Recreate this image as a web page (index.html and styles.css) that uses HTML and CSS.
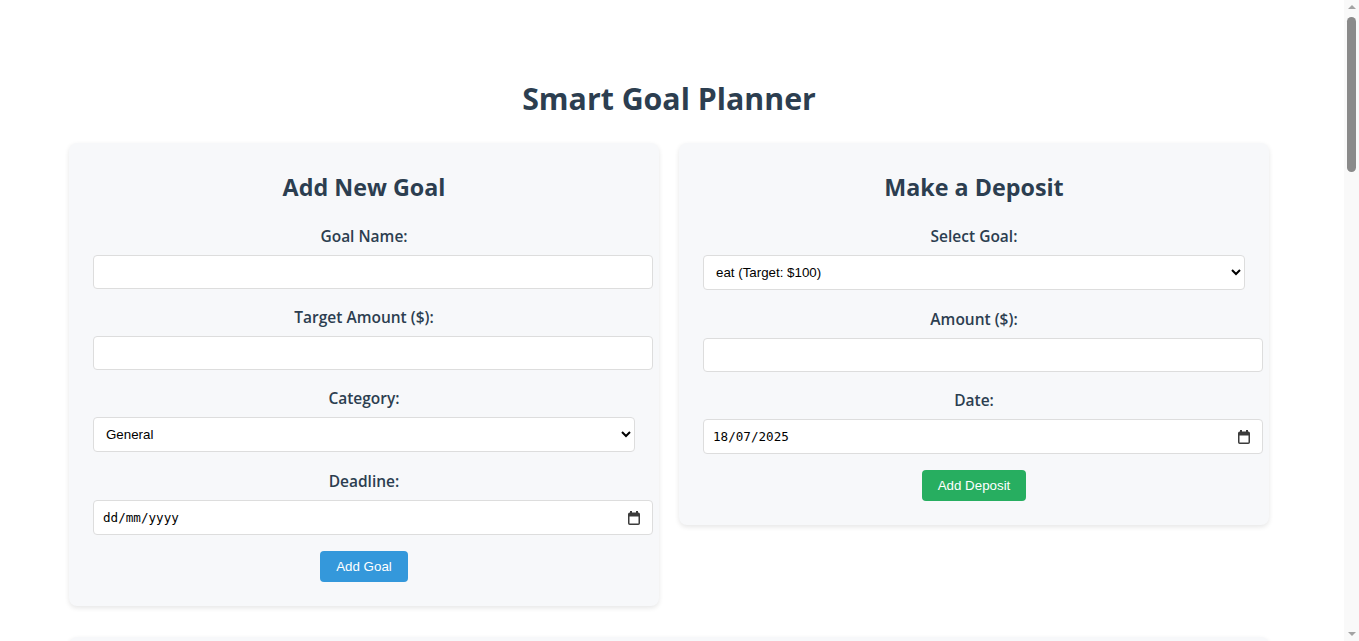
FILE: index.html
```html
<!DOCTYPE html>
<html lang="en">
<head>
<meta charset="utf-8">
<title>Smart Goal Planner</title>
<link rel="stylesheet" href="styles.css">
</head>
<body>
<div class="app">
  <h1 class="title">Smart Goal Planner</h1>
  <div class="grid">
    <section class="card">
      <h2 class="card-title">Add New Goal</h2>
      <form class="form">
        <div class="group">
          <label class="label">Goal Name:</label>
          <input class="field" type="text">
        </div>
        <div class="group">
          <label class="label">Target Amount ($):</label>
          <input class="field" type="number">
        </div>
        <div class="group group-select">
          <label class="label">Category:</label>
          <select class="select">
            <option>General</option>
            <option>Travel</option>
            <option>Education</option>
          </select>
        </div>
        <div class="group group-last">
          <label class="label">Deadline:</label>
          <div class="date-field">
            <input class="date-input" type="text" placeholder="dd/mm/yyyy">
            <svg class="cal" width="12" height="14" viewBox="0 0 12 14"><rect x="2" y="0" width="2" height="2.5" fill="#3b3b3b"/><rect x="8" y="0" width="2" height="2.5" fill="#3b3b3b"/><rect x="0.75" y="2.25" width="10.5" height="11" rx="1" fill="none" stroke="#3b3b3b" stroke-width="1.5"/><rect x="1" y="2.5" width="10" height="3" fill="#3b3b3b"/></svg>
          </div>
        </div>
        <button class="btn btn-blue" type="button">Add Goal</button>
      </form>
    </section>
    <section class="card">
      <h2 class="card-title">Make a Deposit</h2>
      <form class="form">
        <div class="group group-select">
          <label class="label">Select Goal:</label>
          <select class="select">
            <option>eat (Target: $100)</option>
          </select>
        </div>
        <div class="group">
          <label class="label">Amount ($):</label>
          <input class="field" type="number">
        </div>
        <div class="group group-last">
          <label class="label">Date:</label>
          <div class="date-field">
            <input class="date-input" type="text" value="18/07/2025">
            <svg class="cal" width="12" height="14" viewBox="0 0 12 14"><rect x="2" y="0" width="2" height="2.5" fill="#3b3b3b"/><rect x="8" y="0" width="2" height="2.5" fill="#3b3b3b"/><rect x="0.75" y="2.25" width="10.5" height="11" rx="1" fill="none" stroke="#3b3b3b" stroke-width="1.5"/><rect x="1" y="2.5" width="10" height="3" fill="#3b3b3b"/></svg>
          </div>
        </div>
        <button class="btn btn-green" type="button">Add Deposit</button>
      </form>
    </section>
  </div>
  <section class="card card-wide">
    <div class="goal-list"></div>
  </section>
</div>
<div class="scrollbar" aria-hidden="true">
  <span class="sb-arrow sb-up"></span>
  <span class="sb-track"><span class="sb-thumb"></span></span>
  <span class="sb-arrow sb-down"></span>
</div>
</body>
</html>
```
FILE: styles.css
```css
* { box-sizing: content-box; }
html, body { margin: 0; padding: 0; background: #ffffff; }
body {
  font-family: "Open Sans", "Noto Sans", sans-serif;
  color: #2c3e50;
  padding-right: 21px;
}
.app {
  max-width: 1200px;
  margin: 0 auto;
  padding: 77px 0 40px;
}
.title {
  margin: 0 0 23px;
  font-size: 30.3px;
  line-height: 43px;
  font-weight: 700;
  text-align: center;
  color: #2c3e50;
}
.grid {
  display: grid;
  grid-template-columns: 1fr 1fr;
  column-gap: 20px;
  align-items: start;
}
.card {
  background: #f7f8fa;
  border-radius: 8px;
  box-shadow: 0 2px 5px rgba(0, 0, 0, 0.1);
  padding: 24px;
  text-align: center;
}
.card-title {
  margin: 4px 0 23px;
  font-size: 23.3px;
  line-height: 32px;
  font-weight: 700;
  color: #2c3e50;
}
.form { margin: 0; }
.group { margin-bottom: 18px; }
.group-select { margin-bottom: 19px; }
.group-last { margin-bottom: 16px; }
.label {
  display: block;
  margin-bottom: 8px;
  font-size: 15.5px;
  line-height: 21px;
  font-weight: 600;
  color: #2c3e50;
}
.field {
  display: block;
  width: 100%;
  padding: 8px;
  border: 1px solid #dddddd;
  border-radius: 4px;
  background: #ffffff;
  font-family: "Liberation Sans", Arial, sans-serif;
  font-size: 13.33px;
  line-height: 16px;
  height: 16px;
  margin: 0;
  outline: none;
}
.select {
  display: block;
  box-sizing: border-box;
  width: 100%;
  height: 35px;
  padding: 0 8px;
  border: 1px solid #dddddd;
  border-radius: 4px;
  background: #ffffff;
  font-family: "Liberation Sans", Arial, sans-serif;
  font-size: 13.33px;
  color: #000000;
  margin: 0;
}
.date-field {
  display: flex;
  align-items: center;
  width: 100%;
  height: 33px;
  padding: 0 8px;
  border: 1px solid #dddddd;
  border-radius: 4px;
  background: #ffffff;
}
.date-input {
  flex: 1;
  min-width: 0;
  border: none;
  outline: none;
  background: transparent;
  padding: 0 0 0 1px;
  margin: 0;
  font-family: "DejaVu Sans Mono", "Liberation Mono", monospace;
  font-size: 12.6px;
  color: #000000;
}
.date-input::placeholder { color: #000000; opacity: 1; }
.cal { flex: none; margin-right: 4px; }
.btn {
  display: inline-block;
  border: none;
  border-radius: 4px;
  padding: 8px 16px;
  font-family: "Liberation Sans", Arial, sans-serif;
  font-size: 13.33px;
  line-height: 15px;
  color: #ffffff;
  cursor: pointer;
}
.btn-blue { background: #3498db; }
.btn-green { background: #27ae60; }
.card-wide { margin-top: 31px; }
.goal-list { min-height: 1800px; }

.scrollbar {
  position: fixed;
  top: 0;
  right: 0;
  bottom: 0;
  width: 15px;
  background: #f9f9f9;
  display: flex;
  flex-direction: column;
  align-items: center;
}
.sb-arrow {
  flex: none;
  width: 0;
  height: 0;
  border-left: 4px solid transparent;
  border-right: 4px solid transparent;
}
.sb-up {
  margin-top: 5px;
  border-bottom: 4px solid #a3a3a3;
}
.sb-down {
  margin-bottom: 5px;
  border-top: 4px solid #a3a3a3;
}
.sb-track {
  flex: 1;
  width: 100%;
  display: flex;
  justify-content: center;
}
.sb-thumb {
  margin-top: 8px;
  width: 9px;
  height: 155px;
  border-radius: 5px;
  background: #8a8a8a;
}
```
